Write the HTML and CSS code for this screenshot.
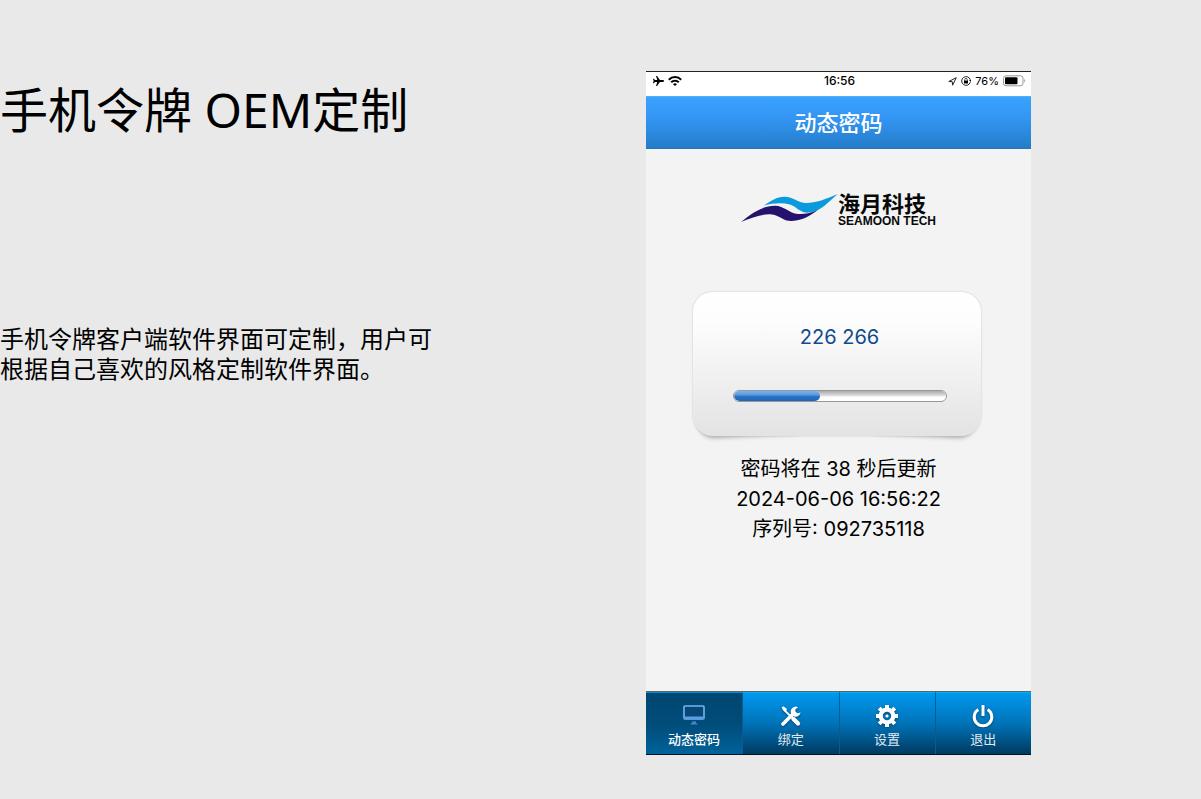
FILE: index.html
```html
<!DOCTYPE html>
<html lang="zh-CN">
<head>
<meta charset="utf-8">
<meta name="viewport" content="width=device-width, initial-scale=1">
<title>手机令牌 OEM定制</title>
<link rel="stylesheet" href="styles.css">
</head>
<body>
<main class="page">
  <section class="intro">
    <h1 class="intro-title">手机令牌 OEM定制</h1>
    <p class="intro-text">手机令牌客户端软件界面可定制，用户可根据自己喜欢的风格定制软件界面。</p>
  </section>
  <section class="phone" aria-label="动态密码">
    <div class="status">
      <div class="status-side">
        <svg width="11" height="10" viewBox="0 0 11 10" aria-hidden="true"><path d="M11 5c0-.6-.6-.9-1.3-.9H6.9L4.1 0H3l1.3 4.1H2L.9 2.7H0L.6 5 0 7.300h.9L2 5.900h2.300L3 10h1.100l2.800-4.100h2.800C10.400 5.900 11 5.600 11 5z" fill="#000"/></svg>
        <svg width="14" height="10" viewBox="0 0 14 10" aria-hidden="true"><g fill="none" stroke="#000" stroke-width="2"><path d="M.8 3.700C4.300.2 9.700.2 13.200 3.700"/><path d="M3.200 6.300c2.100-2.100 5.500-2.100 7.600 0"/></g><path d="M5 8.200q2-1.700 4 0L7 10z"/></svg>
      </div>
      <time class="status-time">16:56</time>
      <div class="status-side status-right">
        <svg width="9" height="9" viewBox="0 0 9 9" aria-hidden="true"><path d="M.8 4.500 8.300.7 4.600 8.200 4.300 4.700z" fill="none" stroke="#222" stroke-width="1"/></svg>
        <svg width="10" height="10" viewBox="0 0 10 10" aria-hidden="true"><path d="M9.300 6.200A4.400 4.400 0 1 1 9.300 3.800" fill="none" stroke="#222"/><path d="M8 4h2v2z"/><path d="M3 4.600h4V7.500H3z"/><path d="M3.700 5V3.700a1.300 1.300 0 0 1 2.600 0V5" fill="none" stroke="#222" stroke-width=".8"/></svg>
        <span>76%</span>
        <svg width="23" height="12" viewBox="0 0 23 12" aria-hidden="true"><rect x=".5" y=".8" width="19.500" height="10" rx="2.500" fill="none" stroke="#999"/><rect x="2" y="2.300" width="12.500" height="7" rx="1"/><path d="M21.200 3.800q2.200 2 0 4z" fill="#aaa"/></svg>
      </div>
    </div>
    <header class="bar"><h2 class="bar-title">动态密码</h2></header>
    <div class="body">
      <div class="logo">
        <svg width="97" height="30" viewBox="0 0 97 30" aria-hidden="true">
          <path d="M23 12.500C30 8 36 3.500 44 3.800c8 .2 13 6 21 6.200C75 10 85 6 97 1 89 7 84 14 75 18c-5 2-10 2.300-14 .5-5-2.300-7-5.500-12-7C41 9.500 32 10 23 12.500z" fill="#0b9bdc"/>
          <path d="M0 29C10 21 20 13 34 12.700c9 0 14 7.500 23 8.300 6 .3 12-.5 20-4-8 5.500-15 10.500-26 11-9 .3-12-5.500-20-6.500C21 20.500 10 25 0 29z" fill="#25126c"/>
        </svg>
        <div class="logo-words"><span class="logo-cn">海月科技</span><span class="logo-en">SEAMOON TECH</span></div>
      </div>
      <div class="card-wrap">
        <div class="card">
          <output class="code">226 266</output>
          <progress class="meter" aria-label="剩余时间" max="100" value="41"></progress>
        </div>
      </div>
      <div class="info">
        <p>密码将在 <span>38</span> 秒后更新</p>
        <p>2024-06-06 16:56:22</p>
        <p>序列号: 092735118</p>
      </div>
    </div>
    <nav class="tabs">
      <button class="tab tab-active" type="button">
        <svg width="24" height="24" viewBox="0 0 24 24" aria-hidden="true"><rect x="2" y="2" width="20" height="13" rx="1" fill="#064775" stroke="#76b4f2" stroke-width="1.600"/><path d="M2 12.500h20V15H2z" fill="#5a9de5"/><path d="M10 17.500h4v1.200l2 1.800H8l2-1.800z" fill="#4388cb"/></svg>
        <span>动态密码</span>
      </button>
      <button class="tab" type="button">
        <svg width="24" height="24" viewBox="0 0 24 24" aria-hidden="true"><g class="glyph"><path d="M4 20 15 9" stroke="#fff" stroke-width="3.600" stroke-linecap="round"/><path d="M19 3.200a5 5 0 1 0 2.600 5.400L18.800 9.200 16.500 8 16.300 5.400z" fill="#fff"/><path d="M4 4.800 14 14.500" stroke="#fff" stroke-width="1.800"/><path d="m2.500 3.500 2-1.200 3.200 2.500-.2 2.500-2 .2z" fill="#fff"/><path d="m14.500 15 4.500 4.500" stroke="#fff" stroke-width="4.200" stroke-linecap="round"/></g></svg>
        <span>绑定</span>
      </button>
      <button class="tab" type="button">
        <svg width="24" height="24" viewBox="0 0 24 24" aria-hidden="true"><g class="glyph"><circle cx="12" cy="12" r="6.300" fill="none" stroke="#fff" stroke-width="4.200"/><circle cx="12" cy="12" r="1.600" fill="#fff"/><path d="M12 1v5M12 18v5M1 12h5M18 12h5M4.200 4.200l3.500 3.500M16.300 16.300l3.500 3.500M4.200 19.800l3.500-3.500M16.300 7.700l3.500-3.500" stroke="#fff" stroke-width="4"/></g></svg>
        <span>设置</span>
      </button>
      <button class="tab" type="button">
        <svg width="24" height="24" viewBox="0 0 24 24" aria-hidden="true"><g class="glyph" fill="none" stroke="#fff" stroke-width="3"><path d="M7.300 5.600a8.800 8.800 0 1 0 9.400 0"/><path d="M12 1v11"/></g></svg>
        <span>退出</span>
      </button>
    </nav>
  </section>
</main>
</body>
</html>
```
FILE: styles.css
```css
* { box-sizing: border-box; }
body {
  margin: 0;
  background: #e9e9e9;
  color: #000;
  font-family: "Noto Sans", "Noto Sans CJK SC", sans-serif;
}
h1, h2, p { margin: 0; font-weight: 400; }
svg { display: block; flex: none; }
.page {
  display: grid;
  grid-template-columns: minmax(0, 646fr) minmax(0, 385fr) minmax(0, 170fr);
  min-height: 100vh;
  padding: 71px 0 44px;
}
.intro-title {
  padding-top: 9px;
  font-size: 48px;
  line-height: 60px;
}
.intro-text {
  max-width: 440px;
  margin-top: 183px;
  font-family: "Noto Sans CJK SC", sans-serif;
  font-size: 24px;
  line-height: 30px;
}
.phone {
  display: flex;
  flex-direction: column;
  background: #f3f3f3;
  border-top: 1px solid #222;
}
.status {
  display: grid;
  grid-template-columns: 1fr auto 1fr;
  align-items: center;
  height: 24px;
  padding: 0 5px 6px 7px;
  background: #fff;
  font: 11px/18px Inter, sans-serif;
}
.status-side { display: flex; align-items: center; gap: 4px; }
.status-right { justify-content: flex-end; }
.status-time { font-weight: 500; font-size: 12px; }
.bar {
  height: 53px;
  border-top: 1px solid #55b0ed;
  border-bottom: 1px solid #2878b8;
  background: linear-gradient(#3aa2ff, #3496f4 40%, #237cc8);
}
.bar-title {
  color: #fff;
  font: 500 22px/48px "Noto Sans CJK SC", sans-serif;
  text-align: center;
}
.body { flex: 1; }
.logo {
  display: flex;
  justify-content: center;
  padding-top: 44px;
}
.logo-words {
  display: flex;
  flex-direction: column;
  color: #080808;
}
.logo-cn { font: 700 22px/18px "Noto Sans CJK SC", sans-serif; }
.logo-en { font: 700 12px/20px "Liberation Sans", sans-serif; }
.card-wrap {
  position: relative;
  z-index: 0;
  width: 288px;
  max-width: 90%;
  margin: 61px auto 0;
  transform: translateX(-2px);
}
.card-wrap::before, .card-wrap::after {
  content: "";
  position: absolute;
  z-index: -1;
  bottom: 4px;
  width: 38%;
  height: 20px;
  border-radius: 0 0 16px 16px;
  box-shadow: 0 4px 4px #aaa;
}
.card-wrap::before { left: 5px; transform: rotate(-3deg); }
.card-wrap::after { right: 5px; transform: rotate(3deg); }
.card {
  display: flex;
  flex-direction: column;
  align-items: center;
  height: 144px;
  padding: 28px 34px 0 40px;
  border-radius: 20px;
  background: linear-gradient(#fff, #fdfdfd 20%, #e3e3e3);
  box-shadow: 0 0 2px #bbb;
}
.code {
  color: #114a8d;
  font: 20px/34px Inter, sans-serif;
}
.meter {
  display: block;
  width: 100%;
  height: 12px;
  margin-top: 36px;
  border: 1px solid #999;
  border-radius: 6px;
  overflow: hidden;
  appearance: none;
  background: none;
}
.meter::-webkit-progress-bar {
  border-radius: 6px;
  background: linear-gradient(#aaa, #ddd 45%, #fff 60%);
}
.meter::-webkit-progress-value {
  border-radius: 6px;
  background: linear-gradient(#78b5ee, #579ade 40%, #2b71c4 55%, #2265b5);
}
.info {
  margin-top: 18px;
  font: 20px/30px Inter, "Noto Sans CJK SC", sans-serif;
  text-align: center;
}
.tabs {
  display: grid;
  grid-template-columns: repeat(4, 1fr);
  height: 64px;
  border-top: 1px solid #53676e;
  border-bottom: 1px solid #001325;
}
.tab {
  display: flex;
  flex-direction: column;
  align-items: center;
  gap: 1px;
  padding: 11px 0 0;
  border: 0;
  border-top: 1px solid #00b2e8;
  border-left: 1px solid #075c91;
  background: linear-gradient(#0098ef, #0073b8 50%, #003a60);
  color: #e2eaf0;
  font: 13px/20px "Noto Sans CJK SC", sans-serif;
}
.tab-active {
  border-top-color: #008ee0;
  border-left: 0;
  background: linear-gradient(#004770, #004c79 50%, #00629a);
  color: #fff;
  font-weight: 500;
}
.glyph { filter: drop-shadow(0 1px 1px #064772); }
```
